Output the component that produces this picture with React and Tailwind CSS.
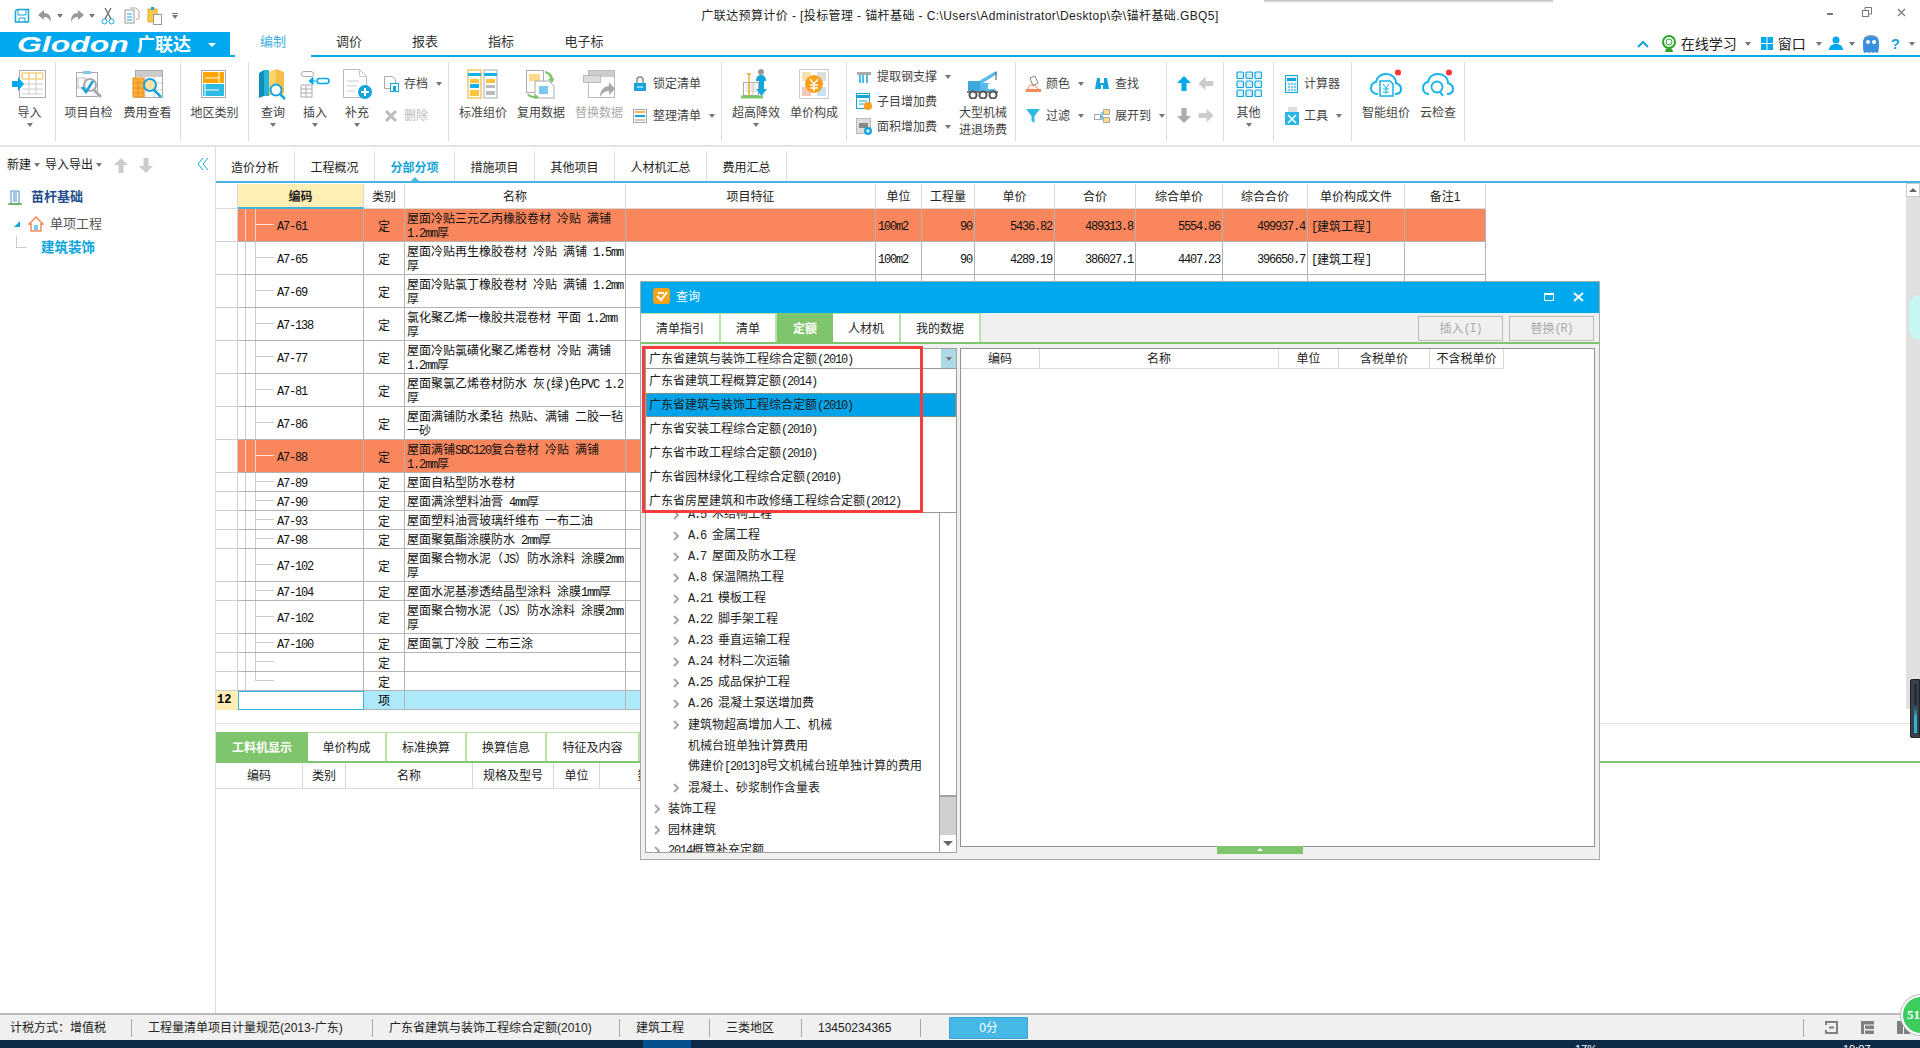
import React from "react";

const BLUE = "#00a9ee";
const MONO = "font-['Liberation_Mono',monospace] text-xs tracking-[-1.2px]";

// SimSun-like text: latin runs are half width of the 12px CJK glyphs
function Sim({ text }) {
  const parts = String(text).split(/([\x20-\x7e]+)/);
  return (
    <>
      {parts.map((p, i) =>
        /^[\x20-\x7e]+$/.test(p) ? (
          <span key={i} className={MONO}>{p}</span>
        ) : (
          <span key={i}>{p}</span>
        )
      )}
    </>
  );
}

function Caret({ className = "" }) {
  return <span className={`inline-block w-0 h-0 border-l-[3px] border-r-[3px] border-t-[4px] border-l-transparent border-r-transparent border-t-[#777] ${className}`}></span>;
}

function Svg({ w = 30, h = 30, vb, children, className = "" }) {
  return <svg width={w} height={h} viewBox={vb || `0 0 ${w} ${h}`} className={className} fill="none">{children}</svg>;
}

const icons = {
  import: (
    <Svg w={36} h={30}>
      <rect x="7.500" y="1.500" width="26" height="27" fill="#fff" stroke="#aaa" />
      <path d="M10 4h21v6H10z" fill="#fff" stroke="#f5b94a" />
      <path d="M17 4v6M24 4v6" stroke="#f5b94a" />
      <path d="M10 15h21M10 20h21M10 25h21M17 10v16M24 10v16" stroke="#ccc" />
      <path d="M0 12h6V8l6 7-6 7v-4H0z" fill={BLUE} />
    </Svg>
  ),
  check: (
    <Svg w={32} h={30}>
      <rect x="3.500" y="3.500" width="21" height="24" fill="#fff" stroke="#aaa" />
      <path d="M10 2h8v3h-8z" fill="#7fc8ea" />
      <rect x="5" y="9" width="7" height="10" stroke="#bbb" />
      <circle cx="17" cy="16" r="6" stroke="#aaa" strokeWidth="2" />
      <path d="M21 21l7 7" stroke="#aaa" strokeWidth="3" />
      <path d="M9 18l4 5 7-11" stroke="#14a5dc" strokeWidth="2.500" />
    </Svg>
  ),
  fee: (
    <Svg w={32} h={30}>
      <rect x="3.500" y="1.500" width="27" height="27" fill="#fff" stroke="#aaa" />
      <rect x="4" y="2" width="26" height="6" fill="#ccc" />
      <path d="M4 14h26M4 21h26M13 8v20M22 8v20" stroke="#ccc" />
      <rect x="1" y="9" width="11" height="19" fill="#fbb040" stroke="#e88f10" />
      <path d="M1 14h11M1 19h11M1 24h11M6 9v19" stroke="#e88f10" />
      <circle cx="18" cy="16" r="6" fill="#fce3a8" stroke="#14a5dc" strokeWidth="2" />
      <path d="M22 21l7 7" stroke="#14a5dc" strokeWidth="2.500" />
    </Svg>
  ),
  area: (
    <Svg w={28} h={30}>
      <rect x=".5" y="1.500" width="24" height="27" fill="#fff" stroke="#aaa" />
      <rect x="2" y="3" width="21" height="11" fill="#ffa400" />
      <rect x="2" y="15" width="21" height="12" fill="#2bbbe3" />
      <path d="M4 9h14M4 21h14M18 3v11M4 15v12" stroke="#fff" />
    </Svg>
  ),
  query: (
    <Svg w={32} h={32}>
      <path d="M2 5l5-3v26l-5 2z" fill="#0f8fb8" />
      <path d="M7 2h5v26H7z" fill="#25b5df" />
      <path d="M12 4l7-3v24l-7 3z" fill="#fbd36a" />
      <path d="M19 1l8 3v22l-8-1z" fill="#f3bf48" />
      <circle cx="19" cy="22" r="5.500" fill="#fff" stroke="#14a5dc" strokeWidth="2" />
      <path d="M23 26l5 5" stroke="#14a5dc" strokeWidth="2.500" />
    </Svg>
  ),
  insert: (
    <Svg w={30} h={30}>
      <rect x="1.500" y="2.500" width="12" height="5" rx="2.500" stroke="#aaa" />
      <path d="M1 16h11v12H1zM1 20h11M1 24h11M6 16v12" stroke="#aaa" />
      <path d="M9 12h7m-7 0l4-3.500v7z" fill={BLUE} stroke={BLUE} />
      <rect x="17" y="9.500" width="12" height="5" rx="2.500" stroke={BLUE} strokeWidth="1.500" />
    </Svg>
  ),
  add: (
    <Svg w={30} h={32}>
      <path d="M1.500 1.500h16l7 7v21h-23z" fill="#fff" stroke="#bbb" />
      <path d="M17.500 1.500v7h7M5 13h12M5 18h10M5 23h8" stroke="#ccc" />
      <circle cx="23" cy="24" r="7" fill="#14a5dc" />
      <path d="M23 20v8M19 24h8" stroke="#fff" strokeWidth="2" />
    </Svg>
  ),
  std: (
    <Svg w={32} h={30}>
      <rect x="1" y="1" width="13" height="28" fill="#fff" stroke="#f5a623" />
      <rect x="17" y="1" width="13" height="28" fill="#fff" stroke="#aaa" />
      <path d="M1 4h13v3H1z" fill="#14b2ea" />
      <path d="M17 4h13v3H17z" fill="#14b2ea" />
      <path d="M3 10h9v4H3z" fill="#fdc43d" />
      <path d="M19 10h9v4h-9z" fill="#fdc43d" />
      <path d="M3 15h9v4H3z" fill="#14b2ea" />
      <path d="M19 16h9v3h-9z" fill="#bbb" />
      <path d="M3 21h9v6H3z" fill="#fdc43d" />
      <path d="M19 22h9v4h-9z" fill="#bbb" />
    </Svg>
  ),
  reuse: (
    <Svg w={32} h={30}>
      <rect x="1.500" y="1.500" width="17" height="22" fill="#fff" stroke="#aaa" />
      <path d="M4 5h11v7H4z" fill="#fdd98a" />
      <path d="M10 12h14l5 5v12H10z" fill="#fff" stroke="#aaa" />
      <path d="M14 17h9v8h-9z" fill="#7cc8ef" />
      <path d="M20 2c5 1 8 4 8 8l2-1-3 5-4-4h2c0-3-2-5-5-6z" fill="#7fc56d" />
      <path d="M2 25c1 3 4 4 8 4l-1 2 5-3-4-3v2c-3 0-5-1-6-2z" fill="#7fc56d" />
    </Svg>
  ),
  replace: (
    <Svg w={34} h={30}>
      <rect x="6.500" y="1.500" width="26" height="27" fill="#fff" stroke="#bbb" />
      <rect x="7" y="2" width="25" height="6" fill="#ccc" />
      <rect x="1.500" y="6.500" width="17" height="7" fill="#ddd" stroke="#bbb" />
      <path d="M18 28c0-7 4-11 9-11v-4l6 7-6 6v-4c-4 0-7 2-9 6z" fill="#aaa" />
    </Svg>
  ),
  height: (
    <Svg w={32} h={32}>
      <rect x="3.500" y="14.500" width="15" height="13" fill="#fff" stroke="#aaa" />
      <path d="M6 17h10M6 20h10M6 23h10M9 15v12M13 15v12" stroke="#ccc" />
      <path d="M1 29h22" stroke="#7fc56d" strokeWidth="3" />
      <path d="M7 6h4M9 6v22" stroke="#f5a623" strokeWidth="1.300" />
      <circle cx="21" cy="4" r="3" fill="#999" />
      <path d="M16 13c0-4 2-6 5-6s5 2 5 6z" fill="#14a5dc" />
      <path d="M19 13h5v8h3l-5.500 7-5.500-7h3z" fill="#14a5dc" />
    </Svg>
  ),
  price: (
    <Svg w={30} h={30}>
      <rect x=".5" y=".5" width="29" height="29" fill="#fff" stroke="#ccc" />
      <rect x="3" y="3" width="9" height="9" fill="#f5e2b0" />
      <rect x="18" y="3" width="9" height="9" fill="#ddd" />
      <rect x="3" y="18" width="9" height="9" fill="#f4c6b8" />
      <rect x="18" y="18" width="9" height="9" fill="#c5e3f0" />
      <circle cx="15" cy="15" r="9" fill="#f8a01a" />
      <path d="M11 10l4 5 4-5M15 15v7M11 16h8M11 19h8" stroke="#fff" strokeWidth="1.400" />
    </Svg>
  ),
  crane: (
    <Svg w={34} h={30}>
      <path d="M8 15L30 2l1 3L12 17z" fill="#5ab9ea" />
      <path d="M30 3v8" stroke="#555" />
      <rect x="2" y="12" width="12" height="10" fill="#3da7e0" />
      <path d="M14 14h9l7 7v3H14z" fill="#5ab9ea" />
      <path d="M22 15h3l4 5h-7z" fill="#fff" />
      <path d="M1 22h31v2H1z" fill="#777" />
      <circle cx="7" cy="26" r="3.500" fill="#fff" stroke="#555" strokeWidth="2" />
      <circle cx="17" cy="26" r="3.500" fill="#fff" stroke="#555" strokeWidth="2" />
      <circle cx="27" cy="26" r="3.500" fill="#fff" stroke="#555" strokeWidth="2" />
    </Svg>
  ),
  grid: (
    <Svg w={26} h={26}>
      {[1, 10, 19].map(y => [1, 10, 19].map(x => <rect key={`${x}-${y}`} x={x} y={y} width="6.500" height="6.500" rx="1" stroke="#14a5dc" strokeWidth="1.200" fill="#d9f1fb" />))}
    </Svg>
  ),
  cloudY: (
    <Svg w={34} h={30}>
      <circle cx="29" cy="3.500" r="3" fill="#f33" />
      <path d="M9 25c-5 0-7-3-7-6 0-4 3-6 5-6 1-5 5-8 10-8 6 0 10 4 10 9 3 1 5 3 5 6s-2 5-6 5" stroke="#14b2ea" strokeWidth="2" />
      <path d="M11 27V12h10l3 3v12z" fill="#fff" stroke="#14b2ea" strokeWidth="1.500" />
      <path d="M14 15l3 4 3-4M17 19v6M14 20h6M14 23h6" stroke="#14b2ea" />
    </Svg>
  ),
  cloudQ: (
    <Svg w={34} h={30}>
      <circle cx="28" cy="3.500" r="3" fill="#f33" />
      <path d="M8 25c-4 0-6-3-6-6 0-4 3-6 5-6 1-5 5-8 10-8 6 0 10 4 10 9 3 1 5 3 5 6s-2 5-6 5" stroke="#14b2ea" strokeWidth="2" />
      <circle cx="16" cy="18" r="5.500" fill="#fff" stroke="#14b2ea" strokeWidth="1.800" />
      <path d="M19 23l3 4" stroke="#14b2ea" strokeWidth="2" />
    </Svg>
  ),
};

const small = {
  save: <Svg w={16} h={16}><path d="M1.500 3v11h13V1.500h-11z" stroke="#14a5dc" strokeWidth="1.500" /><path d="M4 2v5h8V2M5 14v-4h6v4" stroke="#14a5dc" /></Svg>,
  archive: <Svg w={16} h={18}><path d="M1.500 1.500h8l3 3v9h-11z" fill="#fff" stroke="#aaa" /><rect x="7.500" y="8.500" width="8" height="8" fill="#fff" stroke="#14a5dc" /><rect x="10" y="11" width="3" height="5" fill="#14a5dc" /></Svg>,
  del: <Svg w={14} h={14}><path d="M2 2l10 10M12 2L2 12" stroke="#bbb" strokeWidth="3" /></Svg>,
  lock: <Svg w={14} h={16}><path d="M4 7V4a3 3 0 016 0v3" stroke="#888" strokeWidth="1.500" /><rect x="1" y="7" width="12" height="8" fill="#14a5dc" /><path d="M4 11h6" stroke="#fff" /></Svg>,
  tidy: <Svg w={14} h={16}><rect x=".5" y="1.500" width="13" height="13" fill="#fff" stroke="#aaa" /><path d="M2 4h10" stroke="#f5b94a" strokeWidth="2" /><path d="M2 8h10" stroke="#14a5dc" strokeWidth="2" /><path d="M2 12h10" stroke="#ccc" strokeWidth="2" /></Svg>,
  steel: <Svg w={16} h={16}><path d="M1 3h14v3H1z" fill="#aaa" /><path d="M4 6v8M7 6v8M11 6v8" stroke="#14a5dc" strokeWidth="1.500" /></Svg>,
  sub: <Svg w={16} h={18}><rect x=".5" y=".5" width="13" height="15" fill="#fff" stroke="#14a5dc" /><path d="M1 2h12v3H1z" fill="#14a5dc" /><path d="M3 8h8M3 11h6" stroke="#14a5dc" /><circle cx="12" cy="13" r="4" fill="#f8a01a" /></Svg>,
  areaAdd: <Svg w={16} h={18}><rect x=".5" y=".5" width="14" height="15" fill="#ddd" stroke="#bbb" /><path d="M3 5h9v5H3z" fill="#888" /><circle cx="12" cy="13" r="4" fill="#14a5dc" /><path d="M12 11v4M10 13h4" stroke="#fff" /></Svg>,
  color: <Svg w={16} h={18}><path d="M5 3l5-2 3 7-5 3z" fill="#fff" stroke="#888" /><path d="M1 14h15v3H1z" fill="#f28a5a" /><path d="M3 14c0-3 3-5 7-4l3 4" stroke="#f28a5a" /></Svg>,
  find: <Svg w={16} h={16}><path d="M3 2h3v5h4V2h3l2 11H9V9H7v4H1z" fill="#14a5dc" /></Svg>,
  filter: <Svg w={16} h={16}><path d="M1 1h14L9.500 8v7l-3-2V8z" fill="#2bbbe3" /></Svg>,
  expand: <Svg w={16} h={16}><rect x=".5" y="6.500" width="6" height="5" fill="#fff" stroke="#aaa" /><rect x="9.500" y="1.500" width="6" height="5" fill="#fdd98a" stroke="#aaa" /><rect x="9.500" y="9.500" width="6" height="5" fill="#fdd98a" stroke="#aaa" /><path d="M6 9h3M8 4v8" stroke="#14a5dc" /></Svg>,
  calc: <Svg w={13} h={18}><rect x=".5" y=".5" width="12" height="17" fill="#e8f6fc" stroke="#14a5dc" /><path d="M2 3h9v3H2z" fill="#14a5dc" /><path d="M3 9h2M6 9h2M9 9h2M3 12h2M6 12h2M9 12h2M3 15h2M6 15h2M9 15h2" stroke="#14a5dc" /></Svg>,
  tool: <Svg w={14} h={18}><path d="M3 0h9v6H3z" fill="#ddd" /><rect x="0" y="5" width="14" height="13" fill="#2bb5e6" /><path d="M3 8l8 8M11 8l-8 8" stroke="#fff" strokeWidth="1.500" /></Svg>,
};

function Big({ icon, label, label2, caret, gray, className = "w-[58px]" }) {
  return (
    <div className={`flex flex-col items-center pt-[11px] shrink-0 ${className}`}>
      <div className="h-[32px] flex items-center justify-center">{icons[icon]}</div>
      <div className={`mt-[5px] h-[16px] leading-[16px] text-xs whitespace-nowrap ${gray ? "text-[#aaa]" : "text-[#444]"}`}>{label}</div>
      {label2 && <div className="mt-px h-[16px] leading-[16px] text-xs whitespace-nowrap text-[#444]">{label2}</div>}
      {caret && <Caret className="mt-[2px]" />}
    </div>
  );
}

function Small({ icon, label, caret, gray, iconW = "w-[24px]", className = "" }) {
  return (
    <div className={`flex items-center h-[20px] whitespace-nowrap ${className}`}>
      <span className={`flex justify-center shrink-0 ${iconW}`}>{small[icon]}</span>
      <span className={`text-xs ml-px ${gray ? "text-[#bbb]" : "text-[#444]"}`}>{label}</span>
      {caret && <Caret className="ml-[8px]" />}
    </div>
  );
}

function Arrow({ dir, color }) {
  const rot = { up: "", down: "rotate-180", left: "-rotate-90", right: "rotate-90" }[dir];
  return (
    <svg width="14" height="15" viewBox="0 0 14 15" className={rot}>
      <path d="M7 0l7 7H9.500v8h-5V7H0z" fill={color} />
    </svg>
  );
}

function Ribbon() {
  return (
    <div className="h-[90px] shrink-0 border-b-2 border-[#e3e3e3] flex">
      <div className="w-[56px] h-[79px] mt-[5px] border-r border-[#ddd] flex pl-[3px] shrink-0">
        <div className="-mt-[5px]"><Big icon="import" label="导入" caret className="w-[53px]" /></div>
      </div>
      <div className="w-[125px] h-[79px] mt-[5px] border-r border-[#ddd] flex pl-[3px] shrink-0">
        <div className="-mt-[5px] flex">
          <Big icon="check" label="项目自检" className="w-[59px]" />
          <Big icon="fee" label="费用查看" className="w-[59px]" />
        </div>
      </div>
      <div className="w-[68px] h-[79px] mt-[5px] border-r border-[#ddd] flex justify-center shrink-0">
        <div className="-mt-[5px]"><Big icon="area" label="地区类别" /></div>
      </div>
      <div className="w-[200px] h-[79px] mt-[5px] border-r border-[#ddd] flex pl-[3px] shrink-0">
        <div className="-mt-[5px] flex">
          <Big icon="query" label="查询" caret className="w-[42px]" />
          <Big icon="insert" label="插入" caret className="w-[42px]" />
          <Big icon="add" label="补充" caret className="w-[42px]" />
          <div className="flex flex-col gap-[12px] pt-[17px] pl-[1px]">
            <Small icon="archive" label="存档" caret />
            <Small icon="del" label="删除" gray />
          </div>
        </div>
      </div>
      <div className="w-[273px] h-[79px] mt-[5px] border-r border-[#ddd] flex pl-[5px] shrink-0">
        <div className="-mt-[5px] flex">
          <Big icon="std" label="标准组价" />
          <Big icon="reuse" label="复用数据" />
          <Big icon="replace" label="替换数据" gray />
          <div className="flex flex-col gap-[12px] pt-[17px]">
            <Small icon="lock" label="锁定清单" />
            <Small icon="tidy" label="整理清单" caret />
          </div>
        </div>
      </div>
      <div className="w-[125px] h-[79px] mt-[5px] border-r border-[#ddd] flex pl-[5px] shrink-0">
        <div className="-mt-[5px] flex">
          <Big icon="height" label="超高降效" caret />
          <Big icon="price" label="单价构成" />
        </div>
      </div>
      <div className="w-[169px] h-[79px] mt-[5px] border-r border-[#ddd] flex shrink-0">
        <div className="-mt-[5px] flex">
          <div className="flex flex-col gap-[5px] pt-[10px] w-[108px] pl-[5px]">
            <Small icon="steel" label="提取钢支撑" caret />
            <Small icon="sub" label="子目增加费" />
            <Small icon="areaAdd" label="面积增加费" caret />
          </div>
          <Big icon="crane" label="大型机械" label2="进退场费" className="w-[56px]" />
        </div>
      </div>
      <div className="w-[151px] h-[79px] mt-[5px] border-r border-[#ddd] flex shrink-0">
        <div className="-mt-[5px] flex">
          <div className="flex flex-col gap-[12px] pt-[17px] pl-[5px] w-[74px]">
            <Small icon="color" label="颜色" caret />
            <Small icon="filter" label="过滤" caret />
          </div>
          <div className="flex flex-col gap-[12px] pt-[17px]">
            <Small icon="find" label="查找" />
            <Small icon="expand" label="展开到" caret />
          </div>
        </div>
      </div>
      <div className="w-[57px] h-[79px] mt-[5px] border-r border-[#ddd] grid grid-cols-2 content-start justify-items-center gap-y-[17px] pt-[14px] px-[6px] shrink-0">
        <Arrow dir="up" color={BLUE} />
        <Arrow dir="left" color="#ccc" />
        <Arrow dir="down" color="#aaa" />
        <Arrow dir="right" color="#ccc" />
      </div>
      <div className="w-[50px] h-[79px] mt-[5px] border-r border-[#ddd] flex justify-center shrink-0">
        <div className="-mt-[5px]"><Big icon="grid" label="其他" caret className="w-[48px]" /></div>
      </div>
      <div className="w-[78px] h-[79px] mt-[5px] border-r border-[#ddd] shrink-0">
        <div className="flex flex-col gap-[12px] pt-[12px] pl-[6px]">
          <Small icon="calc" label="计算器" iconW="w-[23px]" />
          <Small icon="tool" label="工具" caret iconW="w-[23px]" />
        </div>
      </div>
      <div className="w-[113px] h-[79px] mt-[5px] border-r border-[#ddd] flex pl-[4px] shrink-0">
        <div className="-mt-[5px] flex">
          <Big icon="cloudY" label="智能组价" className="w-[60px]" />
          <Big icon="cloudQ" label="云检查" className="w-[44px]" />
        </div>
      </div>
    </div>
  );
}

function TopBars() {
  return (
    <>
      <div className="h-[32px] shrink-0 flex items-center relative text-xs text-[#222]">
        <div className="w-[230px] flex items-center pl-[14px] shrink-0">
          {small.save}
          <svg width="16" height="14" viewBox="0 0 16 14" className="ml-[7px]"><path d="M1 6l6-5v3c5 0 7 3 7 9-2-4-4-5-7-5v3z" fill="#999" /></svg>
          <Caret className="ml-[4px]" />
          <svg width="16" height="14" viewBox="0 0 16 14" className="ml-[6px]"><path d="M15 6L9 1v3C4 4 2 7 2 13c2-4 4-5 7-5v3z" fill="#999" /></svg>
          <Caret className="ml-[4px]" />
          <svg width="14" height="18" viewBox="0 0 14 18" fill="none" className="ml-[6px]"><path d="M4 1l6 11M10 1L4 12" stroke="#777" strokeWidth="1.500" /><circle cx="3.500" cy="14.500" r="2.500" stroke="#14a5dc" /><circle cx="10.500" cy="14.500" r="2.500" stroke="#14a5dc" /></svg>
          <svg width="16" height="18" viewBox="0 0 16 18" fill="none" className="ml-[9px]"><rect x="1" y="3" width="9" height="13" fill="#fff" stroke="#999" /><path d="M3 7h5M3 10h5M3 13h5" stroke="#14a5dc" /><path d="M6 1h6l3 3v8h-3" stroke="#aaa" /></svg>
          <svg width="16" height="20" viewBox="0 0 16 20" fill="none" className="ml-[7px]"><path d="M1 3h9v13H1z" fill="#fbc94a" stroke="#e8a92a" /><path d="M4 1h3v3H4z" fill="#14a5dc" /><rect x="6.500" y="8.500" width="8" height="10" fill="#fff" stroke="#999" /></svg>
          <span className="flex flex-col items-center gap-px ml-[9px]"><span className="w-[6px] h-px bg-[#777]"></span><Caret /></span>
        </div>
        <div className="flex-1 text-center -ml-[230px] whitespace-nowrap tracking-[0.4px]">广联达预算计价 - [投标管理 - 锚杆基础 - C:\Users\Administrator\Desktop\杂\锚杆基础.GBQ5]</div>
        <div className="absolute left-[1264px] top-0 w-[289px] h-[3px] bg-gradient-to-b from-[#bbb] to-white"></div>
        <div className="absolute right-0 top-0 flex items-center h-[24px] pr-[14px]">
          <span className="w-[6px] h-[2px] bg-[#777] mt-[4px]"></span>
          <svg width="10" height="10" viewBox="0 0 10 10" fill="none" stroke="#777" className="ml-[29px]"><rect x=".5" y="3.500" width="6" height="6" /><path d="M3 3V.5h6.500V7H7" /></svg>
          <svg width="9" height="9" viewBox="0 0 9 9" stroke="#777" strokeWidth="1.200" className="ml-[25px]"><path d="M1 1l7 7M8 1L1 8" /></svg>
        </div>
      </div>
      <div className="h-[25px] shrink-0 flex border-b-2 border-[#00a9ee] relative">
        <div className="w-[230px] h-[25px] bg-[#00a9ee] flex items-center pl-[17px] text-white shrink-0">
          <span className="inline-block w-[120px] origin-left scale-x-[1.45] italic font-bold text-[22px] leading-none font-['Liberation_Sans',sans-serif]">Glodon</span>
          <span className="font-bold text-[18px] leading-none">广联达</span>
          <span className="ml-[17px] w-0 h-0 border-l-[4px] border-r-[4px] border-t-[4px] border-l-transparent border-r-transparent border-t-white"></span>
        </div>
        <div className="ml-[5px] w-[76px] h-[25px] bg-white text-center leading-[20px] text-[13px] text-[#3eaee0]">编制</div>
        <div className="w-[76px] text-center leading-[20px] text-[13px] text-[#333]">调价</div>
        <div className="w-[76px] text-center leading-[20px] text-[13px] text-[#333]">报表</div>
        <div className="w-[76px] text-center leading-[20px] text-[13px] text-[#333]">指标</div>
        <div className="w-[90px] text-center leading-[20px] text-[13px] text-[#333]">电子标</div>
        <div className="absolute right-0 top-0 h-[23px] flex items-center text-sm text-[#222] pr-[5px]">
          <svg width="12" height="8" viewBox="0 0 12 8" fill="none" stroke="#14a5dc" strokeWidth="2"><path d="M1 7l5-5 5 5" /></svg>
          <svg width="16" height="18" viewBox="0 0 16 18" fill="none" className="ml-[12px]"><circle cx="8" cy="7" r="6" stroke="#2aa52a" strokeWidth="2" /><circle cx="8" cy="7" r="3" stroke="#2aa52a" /><path d="M4 17c0-3 2-4 4-4s4 1 4 4z" fill="#2aa52a" /></svg>
          <span className="ml-[4px]">在线学习</span>
          <Caret className="ml-[8px]" />
          <svg width="12" height="14" viewBox="0 0 12 14" className="ml-[10px]" fill={BLUE}><rect width="5.500" height="6" /><rect x="6.500" width="5.500" height="6" /><rect y="7" width="5.500" height="6" /><rect x="6.500" y="7" width="5.500" height="6" /></svg>
          <span className="ml-[5px]">窗口</span>
          <Caret className="ml-[10px]" />
          <svg width="14" height="15" viewBox="0 0 14 15" className="ml-[7px]" fill={BLUE}><circle cx="7" cy="4" r="3.500" /><path d="M0 14c0-4 3-6 7-6s7 2 7 6z" /></svg>
          <Caret className="ml-[6px]" />
          <svg width="18" height="20" viewBox="0 0 18 20" className="ml-[7px]"><path d="M1 8c0-4 4-7 8-7s8 3 8 7c0 6 0 11-2 11l-2-1-2 1-2-1-2 1-2-1-2 1C1 19 1 14 1 8z" fill="#3b8fe0" /><circle cx="6" cy="8" r="2" fill="#fff" /><circle cx="12" cy="8" r="2" fill="#fff" /><path d="M2 4c2-3 12-3 14 0" stroke="#aaa" fill="none" /></svg>
          <span className="ml-[11px] text-[15px] text-[#14a5dc] font-bold">?</span>
          <Caret className="ml-[9px]" />
        </div>
      </div>
    </>
  );
}

const widths = ["w-[22px]", "w-[126px]", "w-[41px]", "w-[221px]", "w-[250px]", "w-[46px]", "w-[53px]", "w-[80px]", "w-[81px]", "w-[87px]", "w-[85px]", "w-[97px]", "w-[81px]"];
const heads = ["", "编码", "类别", "名称", "项目特征", "单位", "工程量", "单价", "合价", "综合单价", "综合合价", "单价构成文件", "备注1"];

const rows = [
  { code: "A7-61", name: "屋面冷贴三元乙丙橡胶卷材 冷贴 满铺\n1.2mm厚", unit: "100m2", qty: "90", a: "5436.82", b: "489313.8", c: "5554.86", d: "499937.4", file: "[建筑工程]", hot: true, h: "h-[33px]" },
  { code: "A7-65", name: "屋面冷贴再生橡胶卷材 冷贴 满铺 1.5mm\n厚", unit: "100m2", qty: "90", a: "4289.19", b: "386027.1", c: "4407.23", d: "396650.7", file: "[建筑工程]", h: "h-[33px]" },
  { code: "A7-69", name: "屋面冷贴氯丁橡胶卷材 冷贴 满铺 1.2mm\n厚", h: "h-[33px]" },
  { code: "A7-138", name: "氯化聚乙烯一橡胶共混卷材 平面 1.2mm\n厚", h: "h-[33px]" },
  { code: "A7-77", name: "屋面冷贴氯磺化聚乙烯卷材 冷贴 满铺\n1.2mm厚", h: "h-[33px]" },
  { code: "A7-81", name: "屋面聚氯乙烯卷材防水 灰(绿)色PVC 1.2\n厚", h: "h-[33px]" },
  { code: "A7-86", name: "屋面满铺防水柔毡 热贴、满铺 二胶一毡\n一砂", h: "h-[33px]" },
  { code: "A7-88", name: "屋面满铺SBC120复合卷材 冷贴 满铺\n1.2mm厚", hot: true, h: "h-[33px]" },
  { code: "A7-89", name: "屋面自粘型防水卷材", h: "h-[19px]" },
  { code: "A7-90", name: "屋面满涂塑料油膏 4mm厚", h: "h-[19px]" },
  { code: "A7-93", name: "屋面塑料油膏玻璃纤维布 一布二油", h: "h-[19px]" },
  { code: "A7-98", name: "屋面聚氨酯涂膜防水 2mm厚", h: "h-[19px]" },
  { code: "A7-102", name: "屋面聚合物水泥（JS）防水涂料 涂膜2mm\n厚", h: "h-[33px]" },
  { code: "A7-104", name: "屋面水泥基渗透结晶型涂料 涂膜1mm厚", h: "h-[19px]" },
  { code: "A7-102", name: "屋面聚合物水泥（JS）防水涂料 涂膜2mm\n厚", h: "h-[33px]" },
  { code: "A7-100", name: "屋面氯丁冷胶 二布三涂", h: "h-[19px]" },
  { code: "", name: "", h: "h-[19px]" },
  { code: "", name: "", h: "h-[19px]", last: true },
];

function Row({ r }) {
  const line = r.hot ? "border-[#fbd0bd]" : "border-[#ccc]";
  const lineBg = r.hot ? "bg-[#fbe3d8]" : "bg-[#ccc]";
  const cell = "border-r border-b border-[#b3b3b3] shrink-0 flex items-center overflow-hidden";
  const num = `justify-end pr-[2px] pt-[3px] ${MONO}`;
  return (
    <div className={`flex ${r.h} text-xs text-[#111]`}>
      <div className={`${widths[0]} shrink-0 bg-white border-b border-r border-[#d0d0d0]`}></div>
      <div className={`flex flex-1 ${r.hot ? "bg-[#f9865c]" : "bg-white"}`}>
        <div className={`${widths[1]} ${cell} items-stretch`}>
          <div className={`w-[8px] border-r ${line}`}></div>
          {r.last ? <div className={`w-[10px] h-1/2 border-r ${line}`}></div> : <div className={`w-[10px] border-r ${line}`}></div>}
          <div className="w-[18px] flex flex-col">
            <div className="flex-1"></div>
            <div className={`h-px ${lineBg} -mt-[2px]`}></div>
            <div className="flex-1"></div>
          </div>
          <div className={`pl-[3px] pt-[3px] flex items-center ${MONO}`}>{r.code}</div>
        </div>
        <div className={`${widths[2]} ${cell} justify-center pt-[3px]`}>定</div>
        <div className={`${widths[3]} ${cell} pl-[2px] pt-[2px] whitespace-pre`}>
          <div>
            {r.name.split("\n").map((l, i) => (
              <div key={i} className="h-[14px] leading-[14px]"><Sim text={l} /></div>
            ))}
          </div>
        </div>
        <div className={`${widths[4]} ${cell}`}></div>
        <div className={`${widths[5]} ${cell} pl-[2px] pt-[3px] ${MONO}`}>{r.unit}</div>
        <div className={`${widths[6]} ${cell} ${num}`}>{r.qty}</div>
        <div className={`${widths[7]} ${cell} ${num}`}>{r.a}</div>
        <div className={`${widths[8]} ${cell} ${num}`}>{r.b}</div>
        <div className={`${widths[9]} ${cell} ${num}`}>{r.c}</div>
        <div className={`${widths[10]} ${cell} ${num}`}>{r.d}</div>
        <div className={`${widths[11]} ${cell} pl-[3px] pt-[3px]`}><Sim text={r.file || ""} /></div>
        <div className={`${widths[12]} ${cell}`}></div>
      </div>
    </div>
  );
}

function MainTable() {
  return (
    <div className="w-[1270px] shrink-0">
      <div className="flex h-[25px] text-xs text-[#222] mt-px">
        {heads.map((h, i) => (
          <div key={i} className={`${widths[i]} shrink-0 border-r border-b border-[#d8d8d8] flex items-center justify-center pt-[2px] ${i === 1 ? "bg-[#ffefb5] font-bold border-b-2 border-b-[#3ab5e0]" : ""}`}>{h}</div>
        ))}
      </div>
      {rows.map((r, i) => <Row key={i} r={r} />)}
      <div className="flex h-[19px] text-xs">
        <div className={`${widths[0]} shrink-0 bg-[#fdeeb5] font-bold font-['Liberation_Mono',monospace] text-[12px] leading-[19px] pl-px`}>12</div>
        <div className={`${widths[1]} shrink-0 bg-white border border-[#3ab0e0]`}></div>
        <div className="flex-1 bg-[#aee8fb] border-b border-[#b3b3b3] flex">
          <div className={`${widths[2]} border-r border-[#b3b3b3] text-center leading-[20px]`}>项</div>
          <div className={`${widths[3]} border-r border-[#b3b3b3]`}></div>
        </div>
      </div>
    </div>
  );
}

function Work() {
  const tabs = [["造价分析", "w-[79px]"], ["工程概况", "w-[80px]"], ["分部分项", "w-[80px]", true], ["措施项目", "w-[80px]"], ["其他项目", "w-[80px]"], ["人材机汇总", "w-[92px]"], ["费用汇总", "w-[80px]"]];
  const bottomTabs = [["单价构成", "w-[79px]"], ["标准换算", "w-[80px]"], ["换算信息", "w-[80px]"], ["特征及内容", "w-[93px]"]];
  const bottomHead = [["编码", "w-[87px]"], ["类别", "w-[43px]"], ["名称", "w-[127px]"], ["规格及型号", "w-[81px]"], ["单位", "w-[46px]"], ["数量", "w-[100px]"]];
  return (
    <div className="flex-1 flex min-h-0 relative">
      <div className="w-[216px] shrink-0 border-r border-[#ddd] text-xs text-[#222]">
        <div className="h-[36px] flex items-center pl-[7px]">
          <span>新建</span>
          <Caret className="ml-[3px]" />
          <span className="ml-[5px]">导入导出</span>
          <Caret className="ml-[3px]" />
          <span className="ml-[12px]"><Arrow dir="up" color="#ccc" /></span>
          <span className="ml-[11px]"><Arrow dir="down" color="#ccc" /></span>
          <svg width="12" height="14" viewBox="0 0 12 14" fill="none" stroke="#14a5dc" className="ml-[44px] -mt-[3px]"><path d="M6 1L1 7l5 6M11 1L6 7l5 6" /></svg>
        </div>
        <div className="flex items-center h-[16px] pl-[8px] mt-[6px]">
          <svg width="14" height="15" viewBox="0 0 14 15" fill="none"><path d="M3 1h8v13H3z" fill="#fff" stroke="#4a8dc8" /><path d="M5 3h4M5 5h4M5 7h4M5 9h4M5 11h4" stroke="#4a8dc8" /><path d="M0 14h14" stroke="#5aaa44" strokeWidth="1.500" /></svg>
          <span className="ml-[9px] font-bold text-[13px] text-[#1f4e8c]">苗杆基础</span>
        </div>
        <div className="flex items-center h-[16px] pl-[14px] mt-[11px]">
          <span className="w-0 h-0 border-b-[6px] border-l-[6px] border-b-[#14a5dc] border-l-transparent"></span>
          <svg width="16" height="16" viewBox="0 0 16 16" fill="none" className="ml-[8px]"><path d="M8 1L1 8h2v7h10V8h2z" fill="#fff" stroke="#f28a5a" strokeWidth="1.500" /><path d="M6 9h4v5H6z" fill="#7cc8ef" /></svg>
          <span className="ml-[6px] text-[13px] text-[#555]">单项工程</span>
        </div>
        <div className="flex pl-[16px] mt-[4px]">
          <span className="w-[11px] h-[12px] border-l border-b border-[#ccc]"></span>
          <span className="ml-[14px] mt-[3px] font-bold text-[13.500px] text-[#0aa5dd] whitespace-nowrap">建筑装饰</span>
        </div>
      </div>
      <div className="flex-1 flex flex-col min-w-0">
        <div className="h-[36px] flex pt-[4px] border-b-2 border-[#45b4de] text-xs text-[#222] shrink-0 relative">
          {tabs.map(([t, w, on]) => (
            <div key={t} className={`${w} shrink-0 border-r border-[#ddd] flex items-center justify-center pt-[3px] ${on ? "text-[#14a5dc] font-bold" : ""}`}>{t}</div>
          ))}
          <span className="absolute left-[195px] bottom-0 w-0 h-0 border-l-[4px] border-r-[4px] border-b-[4px] border-l-transparent border-r-transparent border-b-[#45b4de]"></span>
        </div>
        <div className="flex h-[540px] shrink-0">
          <MainTable />
          <div className="flex-1"></div>
          <div className="w-[14px] bg-[#e0e0e0] h-[526px] flex flex-col">
            <div className="h-[14px] bg-white border border-[#ccc] flex items-center justify-center">
              <span className="w-0 h-0 border-l-[4px] border-r-[4px] border-b-[4px] border-l-transparent border-r-transparent border-b-[#666]"></span>
            </div>
          </div>
        </div>
        <div className="border-t border-[#e2e2e2] h-[9px] shrink-0"></div>
        <div className="h-[31px] flex border-b-2 border-[#7fc56d] shrink-0 text-xs text-[#222]">
          <div className="w-[92px] shrink-0 bg-[#7fc56d] text-white font-bold flex items-center justify-center pt-[2px]">工料机显示</div>
          {bottomTabs.map(([t, w]) => (
            <div key={t} className={`${w} shrink-0 border-t border-r-2 border-[#b8e3a8] flex items-center justify-center pt-[2px]`}>{t}</div>
          ))}
        </div>
        <div className="flex h-[26px] text-xs text-[#222] shrink-0">
          {bottomHead.map(([t, w]) => (
            <div key={t} className={`${w} shrink-0 border-r border-b border-[#d8d8d8] flex items-center justify-center pt-px`}>{t}</div>
          ))}
        </div>
      </div>
      <div className="absolute left-[1910px] top-[532px] w-[10px] h-[59px] bg-[#37424c] rounded-l-[2px] border border-[#222] flex justify-center py-[4px]">
        <div className="w-[3px] h-full bg-gradient-to-b from-[#26303a] from-40% to-[#33b5d8] to-70%"></div>
      </div>
      <div className="absolute left-[1909px] top-[148px] w-[11px] h-[45px] rounded-l-full bg-[#c8f7f3]"></div>
    </div>
  );
}

const quota = ["广东省建筑工程概算定额(2014)", "广东省建筑与装饰工程综合定额(2010)", "广东省安装工程综合定额(2010)", "广东省市政工程综合定额(2010)", "广东省园林绿化工程综合定额(2010)", "广东省房屋建筑和市政修缮工程综合定额(2012)"];
const tree = [
  ["A.5 木结构工程", 1, true], ["A.6 金属工程", 1, true], ["A.7 屋面及防水工程", 1, true], ["A.8 保温隔热工程", 1, true],
  ["A.21 模板工程", 1, true], ["A.22 脚手架工程", 1, true], ["A.23 垂直运输工程", 1, true], ["A.24 材料二次运输", 1, true],
  ["A.25 成品保护工程", 1, true], ["A.26 混凝土泵送增加费", 1, true], ["建筑物超高增加人工、机械", 1, true],
  ["机械台班单独计算费用", 1, false], ["佛建价[2013]8号文机械台班单独计算的费用", 1, false], ["混凝土、砂浆制作含量表", 1, true],
  ["装饰工程", 0, true], ["园林建筑", 0, true], ["2014概算补充定额", 0, true],
];

function Chevron() {
  return <svg width="6" height="10" viewBox="0 0 6 10" fill="none" stroke="#a8a8a8" strokeWidth="2"><path d="M1 1l4 4-4 4" /></svg>;
}

function Dialog() {
  const dtabs = [["清单指引", "w-[80px]"], ["清单", "w-[56px]"], ["定额", "w-[56px]", true], ["人材机", "w-[68px]"], ["我的数据", "w-[80px]"]];
  const rhead = [["编码", "w-[79px]"], ["名称", "w-[239px]"], ["单位", "w-[60px]"], ["含税单价", "w-[91px]"], ["不含税单价", "w-[74px]"]];
  return (
    <div className="absolute left-[640px] top-[281px] w-[960px] h-[579px] bg-[#f0f0f0] border border-[#aaa] text-xs text-[#222] flex flex-col">
      <div className="h-[31px] bg-[#00a9ee] flex items-center text-white shrink-0 pb-[2px]">
        <svg width="18" height="17" viewBox="0 0 18 17" fill="none" className="ml-[12px]"><rect width="17" height="16" rx="3" fill="#f8a01a" /><path d="M4 8l4 4 6-8M5 5h6" stroke="#fff" strokeWidth="2" /></svg>
        <span className="ml-[5px]">查询</span>
        <span className="ml-auto w-[10px] h-[8px] border border-white border-t-[2px]"></span>
        <svg width="11" height="10" viewBox="0 0 11 10" stroke="#fff" strokeWidth="2" className="ml-[19px] mr-[15px]"><path d="M1 1l9 8M10 1L1 9" /></svg>
      </div>
      <div className="h-[31px] flex border-b-2 border-[#7fc56d] shrink-0">
        {dtabs.map(([t, w, on]) => (
          <div key={t} className={`${w} shrink-0 flex items-center justify-center pt-[2px] ${on ? "bg-[#7fc56d] text-white font-bold" : "bg-white border-t border-r-2 border-[#b8e3a8]"}`}>{t}</div>
        ))}
        <div className="ml-auto flex gap-[6px] pr-[5px] pt-[3px]">
          <div className="w-[85px] h-[25px] border border-[#bbb] text-[#aaa] flex items-center justify-center"><Sim text="插入(I)" /></div>
          <div className="w-[85px] h-[25px] border border-[#bbb] text-[#aaa] flex items-center justify-center"><Sim text="替换(R)" /></div>
        </div>
      </div>
      <div className="flex-1 flex pt-[4px] pl-[4px] pr-[4px] pb-[12px] gap-[3px] min-h-0">
        <div className="w-[312px] shrink-0 relative flex flex-col">
          <div className="h-[21px] bg-white border border-[#a0a0a0] border-b-0 flex items-center shrink-0">
            <span className="pl-[3px] flex-1"><Sim text="广东省建筑与装饰工程综合定额(2010)" /></span>
            <span className="w-[15px] h-full bg-[#add8e6] flex items-center justify-center"><Caret /></span>
          </div>
          <div className="flex-1 flex bg-white border border-[#a0a0a0] min-h-0 -mb-[6px]">
            <div className="flex-1 overflow-hidden pt-[134px]">
              {tree.map(([t, lvl, arrow]) => (
                <div key={t} className={`h-[21px] flex items-center whitespace-nowrap ${lvl ? "pl-[27px]" : "pl-[8px]"}`}>
                  <span className="w-[6px] shrink-0">{arrow && <Chevron />}</span>
                  <span className={lvl ? "ml-[9px]" : "ml-[8px]"}><Sim text={t} /></span>
                </div>
              ))}
            </div>
            <div className="w-[17px] shrink-0 border-l border-[#a0a0a0] flex flex-col">
              <div className="flex-1 border-b-2 border-[#a0a0a0]"></div>
              <div className="h-[38px] bg-[#d0d0d0]"></div>
              <div className="h-[17px] flex items-center justify-center">
                <span className="w-0 h-0 border-l-[5px] border-r-[5px] border-t-[5px] border-l-transparent border-r-transparent border-t-[#666]"></span>
              </div>
            </div>
          </div>
          <div className="absolute left-0 right-0 top-[20px] h-[145px] bg-white border border-[#999]">
            {quota.map((q, i) => (
              <div key={q} className={`h-[24px] leading-[24px] pl-[3px] whitespace-nowrap ${i === 1 ? "bg-[#00a2e8] outline-1 outline-dotted outline-[#e9833a] -outline-offset-1" : ""}`}><Sim text={q} /></div>
            ))}
          </div>
          <div className="absolute left-[-3px] top-[-2px] w-[281px] h-[167px] border-[3px] border-[#f83b3b]"></div>
        </div>
        <div className="flex-1 border border-[#8d9299] bg-white relative min-w-0">
          <div className="flex h-[20px]">
            {rhead.map(([t, w]) => (
              <div key={t} className={`${w} shrink-0 border-r border-b border-[#d8d8d8] flex items-center justify-center`}>{t}</div>
            ))}
          </div>
          <div className="absolute left-[256px] bottom-[-8px] w-[86px] h-[8px] bg-[#7fc56d] flex justify-center">
            <span className="w-0 h-0 mt-[2px] border-l-[3px] border-r-[3px] border-b-[3px] border-l-transparent border-r-transparent border-b-white"></span>
          </div>
        </div>
      </div>
    </div>
  );
}

function StatusBar() {
  const items = [["计税方式：增值税", "w-[132px]"], ["工程量清单项目计量规范(2013-广东)", "w-[241px]"], ["广东省建筑与装饰工程综合定额(2010)", "w-[247px]"], ["建筑工程", "w-[90px]"], ["三类地区", "w-[92px]"], ["13450234365", "w-[119px]"]];
  return (
    <div className="h-[27px] shrink-0 bg-[#f0f0f0] border-t-2 border-[#bbb] flex items-center text-xs text-[#222] relative">
      {items.map(([t, w], i) => (
        <div key={t} className={`${w} shrink-0 h-[18px] border-r border-[#a8a8a8] flex items-center whitespace-nowrap ${i === 0 ? "pl-[10px]" : "pl-[16px]"}`}>{t}</div>
      ))}
      <div className="ml-[28px] w-[79px] h-[22px] bg-[#45b8e6] border border-[#3aa6d6] rounded-[1px] text-white flex items-center justify-center">0分</div>
      <div className="ml-auto h-[18px] border-l border-[#a8a8a8] flex items-center gap-[23px] pl-[21px] pr-[10px]">
        <svg width="13" height="13" viewBox="0 0 13 13" fill="none" stroke="#808080" strokeWidth="2"><path d="M1 4V1h11v11H1V9M4 6.500h5" /></svg>
        <svg width="13" height="13" viewBox="0 0 13 13" fill="#808080"><rect width="13" height="3.500" /><rect x="4" y="4.500" width="9" height="3.500" /><rect x="4" y="9.500" width="9" height="3.500" /><rect width="3" height="13" /></svg>
        <svg width="13" height="13" viewBox="0 0 13 13" fill="#808080"><rect width="6" height="13" /><rect x="7" width="6" height="13" /></svg>
      </div>
      <div className="absolute right-[-21px] top-[-20px] w-[40px] h-[40px] rounded-full bg-[#3fcc5e] border-2 border-white shadow-[0_0_0_1px_#bbb] flex items-center pl-[4px] text-white font-bold text-[13px] font-['Liberation_Serif',serif]">51</div>
    </div>
  );
}

function Taskbar() {
  return (
    <div className="h-[8px] shrink-0 bg-[#0c2a48] flex overflow-hidden text-white text-xs leading-[12px] relative">
      <div className="ml-[643px] w-[48px] h-full bg-[#04508c]"></div>
      <span className="absolute left-[1575px] top-[3px] text-[11px]">17%</span>
      <span className="absolute left-[1843px] top-[3px] text-[11px]">10:07</span>
    </div>
  );
}

export default function App() {
  return (
    <div className="w-[1920px] h-[1048px] relative overflow-hidden bg-white flex flex-col font-['Liberation_Sans','Noto_Sans_CJK_SC',sans-serif]">
      <TopBars />
      <Ribbon />
      <Work />
      <StatusBar />
      <Taskbar />
      <Dialog />
    </div>
  );
}
